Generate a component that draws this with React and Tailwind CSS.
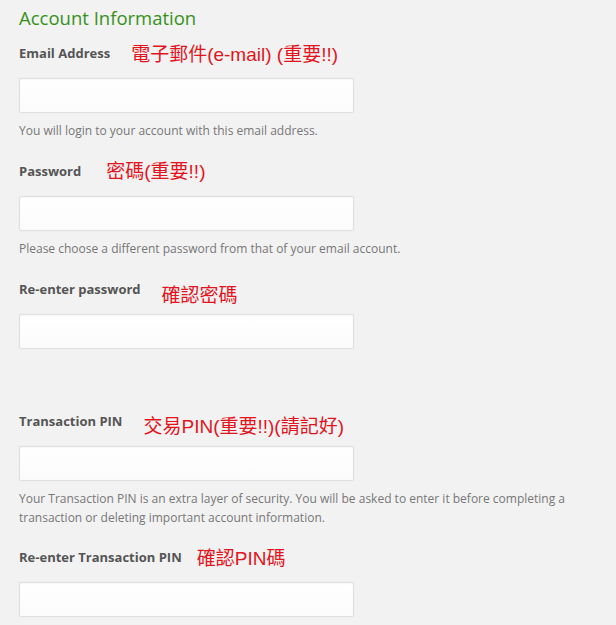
import React from "react";

const cjk = { fontFamily: '"Liberation Sans", "Noto Sans CJK TC", sans-serif' };

function Label({ text, note, noteOffset, gap }) {
  return (
    <div className="flex items-start h-5">
      <span className="text-[13px] leading-5 font-bold text-[#555555]">{text}</span>
      <span
        className={`text-[19px] leading-5 text-[#e3141d] whitespace-nowrap ${gap} ${noteOffset}`}
        style={cjk}
      >
        {note}
      </span>
    </div>
  );
}

function Input({ mt }) {
  return (
    <div
      className={`${mt} w-[335px] h-[35px] bg-gradient-to-b from-white to-[#fbfbfb] border border-[#e0e0e0] rounded-[2px] shadow-[0_0_2px_rgba(0,0,0,0.06),inset_0_1px_2px_rgba(0,0,0,0.04)]`}
    />
  );
}

export default function App() {
  return (
    <div
      className="w-[616px] h-[625px] bg-[#f2f2f2] pl-[19px] overflow-hidden"
      style={{ fontFamily: '"Open Sans", sans-serif' }}
    >
      <div className="pt-[6px] text-[18.5px] leading-6 font-medium text-[#36911b]">Account Information</div>

      <div className="mt-[13px]">
        <Label text="Email Address" note="電子郵件(e-mail) (重要!!)" gap="ml-[21px]" noteOffset="mt-[2px]" />
      </div>
      <Input mt="mt-[15px]" />
      <div className="mt-[8px] text-[12px] leading-[19px] text-[#777777]">
        You will login to your account with this email address.
      </div>

      <div className="mt-[21px]">
        <Label text="Password" note="密碼(重要!!)" gap="ml-[25px]" noteOffset="mt-[1px]" />
      </div>
      <Input mt="mt-[15px]" />
      <div className="mt-[8px] text-[12px] leading-[19px] text-[#777777]">
        Please choose a different password from that of your email account.
      </div>

      <div className="mt-[21px]">
        <Label text="Re-enter password" note="確認密碼" gap="ml-[21px]" noteOffset="mt-[7px]" />
      </div>
      <Input mt="mt-[15px]" />

      <div className="mt-[62px]">
        <Label text="Transaction PIN" note="交易PIN(重要!!)(請記好)" gap="ml-[21px]" noteOffset="mt-[6px]" />
      </div>
      <Input mt="mt-[15px]" />
      <div className="mt-[8px] w-[575px] text-[12px] leading-[19px] text-[#777777]">
        Your Transaction PIN is an extra layer of security. You will be asked to enter it before completing a
        transaction or deleting important account information.
      </div>

      <div className="mt-[20px]">
        <Label text="Re-enter Transaction PIN" note="確認PIN碼" gap="ml-[15px]" noteOffset="mt-[2px]" />
      </div>
      <Input mt="mt-[15px]" />
    </div>
  );
}
